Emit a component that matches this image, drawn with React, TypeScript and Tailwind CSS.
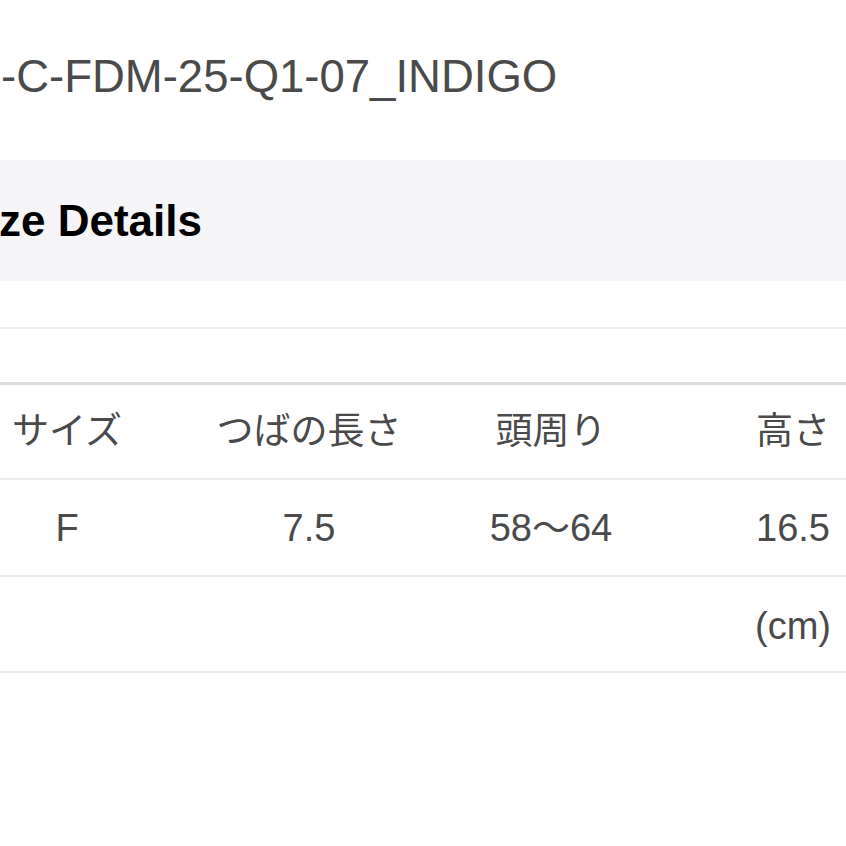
import React from "react"

const headers = ["サイズ", "つばの長さ", "頭周り", "高さ"]
const values = ["F", "7.5", "58〜64", "16.5"]

export default function App() {
  return (
    <div
      className="w-full h-[846px] overflow-hidden bg-white"
      style={{ fontFamily: '"Liberation Sans", "Noto Sans CJK JP", sans-serif' }}
    >
      {/* Product code */}
      <div className="pt-[54px] pl-[1px] h-[160px]">
        <p className="text-[45.5px] leading-none text-[#4a4a4a] whitespace-nowrap">-C-FDM-25-Q1-07_INDIGO</p>
      </div>

      {/* Section heading */}
      <div className="h-[121px] bg-[#f5f5f7] flex items-center">
        <h2 className="text-[44px] font-bold text-black leading-none whitespace-nowrap -ml-[1px]">ze Details</h2>
      </div>
      <div className="h-[48px] border-b-2 border-[#efefef]" />

      {/* Size table */}
      <div className="mt-[53px] border-t-[3px] border-[#dcdcdc]">
        <div className="-ml-[54px] w-[968px]">
          <div className="grid grid-cols-4 h-[95px] border-b-2 border-[#ededed] items-center">
            {headers.map((h) => (
              <div key={h} className="text-center text-[37px] text-[#4a4a4a] whitespace-nowrap">
                {h}
              </div>
            ))}
          </div>
          <div className="grid grid-cols-4 h-[97px] border-b-2 border-[#ededed] items-center pt-[2px]">
            {values.map((v) => (
              <div key={v} className="text-center text-[38px] text-[#4a4a4a] whitespace-nowrap">
                {v}
              </div>
            ))}
          </div>
          <div className="grid grid-cols-4 h-[96px] border-b-2 border-[#ededed] items-center pt-[4px]">
            <div />
            <div />
            <div />
            <div className="text-center text-[38px] text-[#4a4a4a]">(cm)</div>
          </div>
        </div>
      </div>
    </div>
  )
}
